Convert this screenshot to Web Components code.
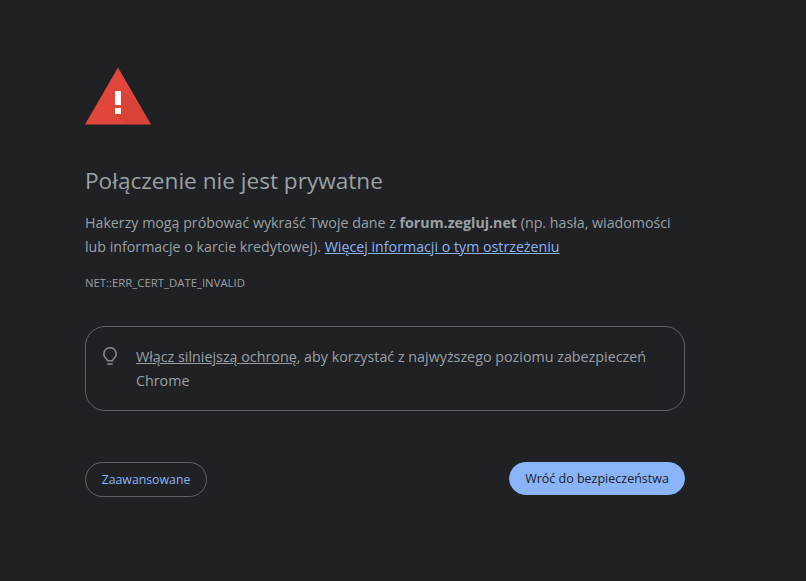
<!DOCTYPE html>
<html><head><meta charset="utf-8"><style>
html,body{margin:0;height:100%;background:#202124}
body{font-family:"Open Sans","Noto Sans",sans-serif;color:#9aa0a6;overflow:hidden}
</style></head><body>
<interstitial-page>
<warning-icon></warning-icon>
<page-heading>Połączenie nie jest prywatne</page-heading>
<page-text>Hakerzy mogą próbować wykraść Twoje dane z <b>forum.zegluj.net</b> (np. hasła, wiadomości<br>lub informacje o karcie kredytowej). <a href="#">Więcej informacji o tym ostrzeżeniu</a></page-text>
<error-code>NET::ERR_CERT_DATE_INVALID</error-code>
<promo-card><a href="#">Włącz silniejszą ochronę</a>, aby korzystać z najwyższego poziomu zabezpieczeń<br>Chrome</promo-card>
<action-row>
<pill-button slot="left">Zaawansowane</pill-button>
<pill-button slot="right" primary>Wróć do bezpieczeństwa</pill-button>
</action-row>
</interstitial-page>
<script>
function def(name, css, html){
  customElements.define(name, class extends HTMLElement{
    constructor(){super();this.attachShadow({mode:'open'}).innerHTML='<style>'+css+'</style>'+html;}
  });
}
def('interstitial-page',':host{display:flex;flex-direction:column;width:600px;padding:67px 0 0 85px}','<slot></slot>');
def('warning-icon',':host{display:block;height:58px}svg{display:block}',
 `<svg width="66" height="58" viewBox="0 0 66 58"><polygon points="33,0.5 66,57.5 0,57.5" fill="#e0463a"/><polygon points="36,24 36,47 30,47 41,57.5 66,57.5 50,33 36,24" fill="#c93f34" opacity=".35"/><rect x="30" y="24" width="6" height="14" fill="#fff"/><rect x="30" y="41" width="6" height="6" fill="#fff"/></svg>`);
def('page-heading',':host{display:block;margin-top:41px;font-size:22.6px;line-height:30px;color:#9aa0a6}','<slot></slot>');
def('page-text',`:host{display:block;margin-top:15px;font-size:14.22px;line-height:24px;color:#9aa0a6}
::slotted(a){color:#8ab4f8}::slotted(b){font-weight:700}`,'<slot></slot>');
def('error-code',':host{display:block;margin-top:16px;font-size:11.35px;line-height:16px;color:#9aa0a6}','<slot></slot>');
def('promo-card',`:host{display:flex;box-sizing:border-box;margin-top:35px;height:85px;border:1px solid #5f6368;border-radius:20px;padding:18px 20px 0 17px;font-size:14.3px;line-height:24px;color:#9aa0a6}
svg{flex:none;margin:2px 19px 0 0;display:block}div{flex:1}::slotted(a){color:#9aa0a6}`,
 `<svg width="14" height="18" viewBox="0 0 14 18" fill="none" stroke="#80868b" stroke-width="1.6"><path d="M7 .8a6.1 6.1 0 0 0-3.6 11c.6.5 1 1.1 1 2h5.2c0-.9.4-1.5 1-2A6.1 6.1 0 0 0 7 .8z"/><path d="M4.2 17h5.6"/></svg><div><slot></slot></div>`);
def('action-row',':host{display:flex;justify-content:space-between;align-items:flex-start;margin-top:51px}','<slot name="left"></slot><slot name="right"></slot>');
customElements.define('pill-button', class extends HTMLElement{
  constructor(){super();this.attachShadow({mode:'open'}).innerHTML=`<style>
  :host{display:block}
  button{display:block;box-sizing:border-box;font:12.3px/1 "Open Sans","Noto Sans",sans-serif;width:122px;height:35px;padding:2px 0 0;border-radius:18px;border:1px solid #5f6368;background:transparent;color:#8ab4f8}
  :host([primary]) button{width:176px;height:33px;font-size:12.5px;background:#8ab4f8;border-color:#8ab4f8;color:#202124}
  </style><button><slot></slot></button>`;}
});
</script>
</body></html>
